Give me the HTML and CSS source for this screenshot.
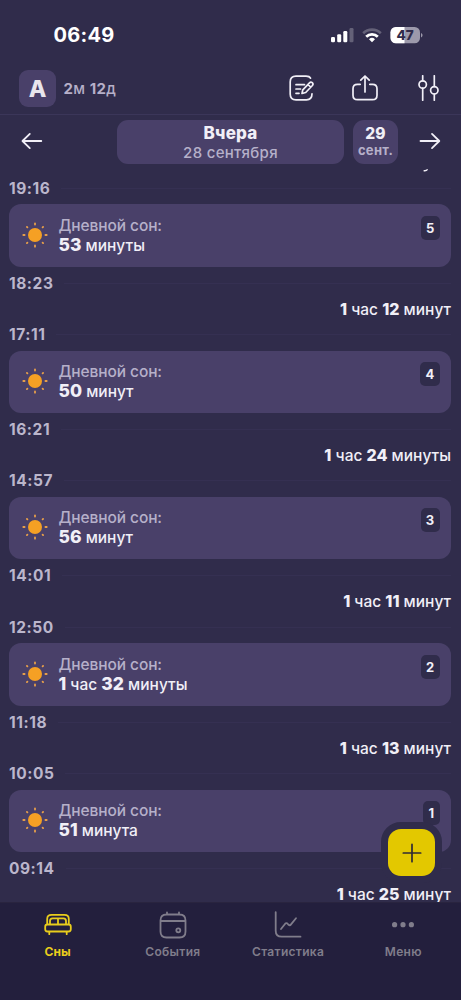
FILE: index.html
```html
<!DOCTYPE html>
<html lang="ru">
<head>
<meta charset="utf-8">
<title>Сны</title>
<link rel="stylesheet" href="styles.css">
</head>
<body>
<svg class="defs" width="0" height="0">
  <symbol id="sun" viewBox="0 0 26 26">
    <circle cx="13" cy="13" r="7" fill="#f5a024"/>
    <g stroke="#e9a04a" stroke-width="1.8" stroke-linecap="round">
      <path d="M13 1.3v1.3M13 23.4v1.3M1.3 13h1.3M23.4 13h1.3M4.9 4.9l.5.5M20.6 20.6l.5.5M4.9 21.1l.5-.5M20.6 5.4l.5-.5"/>
    </g>
  </symbol>
</svg>
<div class="app">
  <div class="status">
    <span class="clock">06:49</span>
    <svg class="status-icons" width="94" height="18" viewBox="0 0 94 18">
      <g fill="#fff">
        <rect x="1" y="11" width="4" height="5.3" rx="1.2"/>
        <rect x="7.2" y="8.3" width="4" height="8" rx="1.2"/>
        <rect x="13.3" y="5" width="4" height="11.3" rx="1.2"/>
        <rect x="19.5" y="2" width="4" height="14.3" rx="1.2" opacity=".25"/>
        <path d="M42 16.2l-3-3a4.4 4.4 0 0 1 6 0z"/>
      </g>
      <path d="M36.2 10.7a8.3 8.3 0 0 1 11.6 0" fill="none" stroke="#fff" stroke-width="2.8"/>
      <path d="M33.2 7.2a12.6 12.6 0 0 1 17.6 0" fill="none" stroke="#fff" stroke-opacity=".25" stroke-width="2.6"/>
      <rect x="60.5" y="1" width="29.5" height="16.3" rx="5.3" fill="#9c99ab"/>
      <path d="M74.5 1v16.3h-8.700a5.300 5.300 0 0 1-5.300-5.300v-5.700a5.300 5.300 0 0 1 5.300-5.300z" fill="#fff"/>
      <path d="M91 7v4.500c2-.8 2-3.700 0-4.500z" fill="#9c99ab"/>
      <text class="battery" x="75.2" y="13.8" text-anchor="middle">47</text>
    </svg>
  </div>
  <header class="header">
    <div class="avatar">A</div>
    <div class="age"><b>2</b>м <b>12</b>д</div>
    <svg class="tool" width="26" height="26" viewBox="0 0 26 26">
      <path d="M21.500 3.200C20.700 1.600 19 1.200 17 1.200H7C3 1.200 1.200 3 1.200 7v12c0 4 1.800 5.800 5.800 5.800h10.500c4 0 5.500-1.800 5.500-6M7 9.700h8.500M7 14h4.500M7 18.300h3"/>
      <path d="M13 18.500l.8-3.700 6.700-7c1.800-1.800 4.600.7 2.900 2.700l-6.700 7zM19 9.500l2.700 2.700"/>
    </svg>
    <svg class="tool" width="26" height="26" viewBox="0 0 26 26">
      <path d="M8.200 9.300H5.500C2.500 9.300 1 10.800 1 13.800v6.400c0 3 1.500 4.500 4.500 4.500h15c3 0 4.500-1.500 4.500-4.500v-6.400c0-3-1.500-4.500-4.500-4.500h-2.700M13 17V1.200M8.800 5.200L13 1l4.200 4.200"/>
    </svg>
    <svg class="tool" width="26" height="26" viewBox="0 0 26 26">
      <path d="M7.700.8v4.900M7.700 13.300v11.900M19.300.8v10.700M19.300 19.100v6.100"/>
      <circle cx="7.700" cy="9.500" r="3.700"/><circle cx="19.300" cy="15.300" r="3.700"/>
    </svg>
  </header>
  <nav class="days">
    <svg class="arrow" width="22" height="18" viewBox="0 0 22 18"><path d="M20.300 9H1.700M8.800 1.900L1.500 9l7.300 7.100"/></svg>
    <div class="day"><b>Вчера</b><span>28 сентября</span></div>
    <div class="next"><b>29</b><span>сент.</span></div>
    <svg class="arrow" width="22" height="18" viewBox="0 0 22 18"><path d="M1.500 9h18.600M13 1.900L20.300 9 13 16.100"/></svg>
  </nav>
  <main class="list">
    <svg class="tail" width="6" height="3" viewBox="0 0 6 3"><path d="M.6 1.600c1.700.4 3 .1 4-1.200" fill="none" stroke="#f1eff7" stroke-width="1.300"/></svg>
    <div class="time">19:16</div>
    <section class="card"><svg class="sun" width="26" height="26"><use href="#sun"/></svg><div class="info"><span class="kind">Дневной сон:</span><span class="dur"><b>53</b> минуты</span></div><span class="num">5</span></section>
    <div class="time end">18:23</div>
    <div class="gap"><span><b>1</b> час <b>12</b> минут</span></div>
    <div class="time">17:11</div>
    <section class="card"><svg class="sun" width="26" height="26"><use href="#sun"/></svg><div class="info"><span class="kind">Дневной сон:</span><span class="dur"><b>50</b> минут</span></div><span class="num">4</span></section>
    <div class="time end">16:21</div>
    <div class="gap"><span><b>1</b> час <b>24</b> минуты</span></div>
    <div class="time">14:57</div>
    <section class="card"><svg class="sun" width="26" height="26"><use href="#sun"/></svg><div class="info"><span class="kind">Дневной сон:</span><span class="dur"><b>56</b> минут</span></div><span class="num">3</span></section>
    <div class="time end">14:01</div>
    <div class="gap"><span><b>1</b> час <b>11</b> минут</span></div>
    <div class="time">12:50</div>
    <section class="card"><svg class="sun" width="26" height="26"><use href="#sun"/></svg><div class="info"><span class="kind">Дневной сон:</span><span class="dur"><b>1</b> час <b>32</b> минуты</span></div><span class="num">2</span></section>
    <div class="time end">11:18</div>
    <div class="gap"><span><b>1</b> час <b>13</b> минут</span></div>
    <div class="time">10:05</div>
    <section class="card"><svg class="sun" width="26" height="26"><use href="#sun"/></svg><div class="info"><span class="kind">Дневной сон:</span><span class="dur"><b>51</b> минута</span></div><span class="num">1</span></section>
    <div class="time end">09:14</div>
    <div class="gap"><span><b>1</b> час <b>25</b> минут</span></div>
    <div class="add"><svg width="20" height="20" viewBox="0 0 20 20"><path d="M10 1.300v17.400M1.300 10h17.400" stroke="#302b35" stroke-width="1.700" stroke-linecap="round"/></svg></div>
  </main>
  <footer class="tabs">
    <div class="tab active">
      <svg width="28" height="28" viewBox="0 0 28 28"><path d="M3.200 13.500V8c0-3 1.800-4.200 4.300-4.200h13c2.500 0 4.300 1.200 4.300 4.200v5.500M6 13.500V10c0-1.700.9-2.600 2.600-2.600h10.800c1.700 0 2.600.9 2.600 2.600v3.500M14 7.400v6.100M3.500 13.500h21c1.600 0 2.300.8 2.300 2.200v2.600c0 1.400-.8 2.200-2.200 2.200H3.400c-1.400 0-2.200-.8-2.200-2.200v-2.600c0-1.400.7-2.200 2.300-2.200zM5.300 20.700v2.500M22.700 20.700v2.500"/></svg>
      <span>Сны</span>
    </div>
    <div class="tab">
      <svg width="28" height="28" viewBox="0 0 28 28"><path d="M7.500 3.500h13c4 0 6 2 6 6v11c0 4-2 6-6 6h-13c-4 0-6-2-6-6v-11c0-4 2-6 6-6zM1.500 10h25M8 1.500v2M20 1.500v2"/><circle cx="19.300" cy="19.300" r="2"/></svg>
      <span>События</span>
    </div>
    <div class="tab">
      <svg width="28" height="28" viewBox="0 0 28 28"><path d="M1.700 1.200v18.500c0 4 2 6 6 6h18.800M7 18l4.200-5.300c.7-.8 1.500-.9 2.200-.2l1.200 1.300c.8.7 1.600.6 2.200-.2l5.200-6.300"/></svg>
      <span>Статистика</span>
    </div>
    <div class="tab">
      <svg width="28" height="28" viewBox="0 0 28 28"><g fill="#807d8b" stroke="none"><circle cx="5.600" cy="13.700" r="2.600"/><circle cx="14" cy="13.700" r="2.600"/><circle cx="22.400" cy="13.700" r="2.600"/></g></svg>
      <span>Меню</span>
    </div>
  </footer>
</div>
</body>
</html>
```
FILE: styles.css
```css
* { box-sizing: border-box; }
body { margin: 0; background: #302c4b; font-family: Inter, "Noto Sans", sans-serif; color: #f1eff7; }
b { font-weight: 800; }
.defs { display: block; }
.app { width: 461px; height: 1000px; display: flex; flex-direction: column; overflow: hidden; }
.status { height: 62px; flex: none; display: flex; justify-content: space-between; align-items: center; padding: 7px 37px 0 53.5px; }
.clock { font-size: 20px; font-weight: 700; color: #fff; line-height: 24px; letter-spacing: .25px; }
.battery { font-size: 13.5px; font-weight: 800; fill: #302c4b; }
.header { height: 53px; flex: none; display: flex; align-items: center; padding: 0 20px 0 19px; border-bottom: 1px solid #3b3659; }
.avatar { width: 37px; height: 37px; border-radius: 9px; background: #494069; display: flex; align-items: center; justify-content: center; padding-top: 1px; font-size: 23px; font-weight: 800; color: #e8e5ec; }
.age { margin-left: 7.5px; flex: 1; font-size: 15px; font-weight: 500; color: #b6b0c9; letter-spacing: .3px; }
.age b { font-weight: 700; }
.tool { margin-left: 37px; fill: none; stroke: #f1eff7; stroke-width: 1.7; stroke-linecap: round; stroke-linejoin: round; }
.days { height: 53.7px; flex: none; display: flex; align-items: flex-start; padding: 4.7px 20px 0 21px; }
.arrow { margin-top: 12.5px; fill: none; stroke: #f1eff7; stroke-width: 1.8; stroke-linecap: round; stroke-linejoin: round; }
.day, .next { height: 44.5px; border-radius: 11px; background: #494069; display: flex; flex-direction: column; align-items: center; }
.day { width: 227px; margin-left: 74px; padding-top: 3.5px; }
.day b { font-size: 17px; line-height: 20px; letter-spacing: .2px; }
.day span { font-size: 15px; line-height: 19px; font-weight: 500; color: #b6b0c9; letter-spacing: .3px; }
.next { width: 45px; margin: 0 auto 0 9px; padding-top: 4px; }
.next b { font-size: 15.5px; line-height: 19px; letter-spacing: .3px; }
.next span { font-size: 13px; line-height: 15px; font-weight: 700; color: #b6b0c9; letter-spacing: .3px; }
.list { position: relative; flex: 1; min-height: 0; overflow: hidden; padding: 3.2px 10px 0 9px; }
.tail { position: absolute; left: 423px; top: 0; }
.time { height: 32.5px; display: flex; align-items: center; gap: 11px; font-size: 15.5px; font-weight: 700; letter-spacing: .55px; color: #bbb6cc; }
.time::after { content: ""; flex: 1; height: 1px; background: #353052; }
.time.end { height: 33px; }
.card { height: 62.5px; border-radius: 12px; background: #494069; display: flex; align-items: center; padding: 0 11.5px 0 13px; }
.sun { flex: none; margin-top: -2px; }
.info { margin-left: 10.5px; flex: 1; display: flex; flex-direction: column; }
.kind { font-size: 15.5px; font-weight: 500; line-height: 19px; color: #b6b0c9; letter-spacing: -.1px; }
.dur { font-size: 15.5px; font-weight: 500; line-height: 20px; }
.dur b { font-size: 17.5px; }
.num { align-self: flex-start; margin-top: 11.5px; height: 24px; padding: 0 5.3px; border-radius: 5px; background: #302c4b; display: flex; align-items: center; justify-content: center; font-size: 13px; font-weight: 700; }
.gap { height: 18.3px; text-align: right; font-size: 15.5px; line-height: 19.7px; font-weight: 500; }
.gap b { font-size: 16px; }
.add { position: absolute; left: 381px; top: 653.5px; width: 61px; height: 61px; border: 7px solid #302c4b; border-radius: 20px; background: #302c4b; display: flex; align-items: center; justify-content: center; }
.add::before { content: ""; position: absolute; inset: 0; border-radius: 13px; background: #e3c800; }
.add svg { position: relative; }
.tabs { height: 98px; flex: none; display: grid; grid-template-columns: repeat(4, 1fr); background: #231f3d; border-top: 1px solid #29243f; padding-top: 8px; }
.tab { display: flex; flex-direction: column; align-items: center; gap: 5px; font-size: 12px; line-height: 15px; font-weight: 600; color: #807d8b; letter-spacing: .3px; }
.tab svg { fill: none; stroke: #807d8b; stroke-width: 1.8; stroke-linecap: round; stroke-linejoin: round; }
.tab.active { color: #e9cd1c; font-weight: 700; letter-spacing: 0; }
.tab.active svg { stroke: #e9cd1c; }
```
